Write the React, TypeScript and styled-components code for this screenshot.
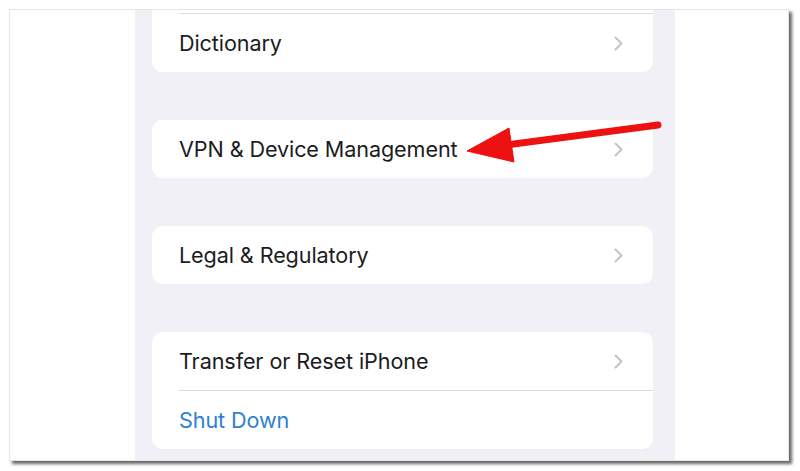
import React from 'react'
import styled, { createGlobalStyle } from 'styled-components'

const GlobalStyle = createGlobalStyle`
  html, body {
    margin: 0;
    padding: 0;
    background: #ffffff;
  }
  body {
    font-family: Inter, 'Noto Sans', 'Liberation Sans', sans-serif;
    -webkit-font-smoothing: antialiased;
  }
`

const Page = styled.div`
  position: relative;
  width: 800px;
  height: 471px;
  padding: 9px 0 0 9px;
  box-sizing: border-box;
  overflow: hidden;
`

const Frame = styled.div`
  width: 780px;
  height: 452px;
  box-sizing: border-box;
  border: 1px solid #e6e6e6;
  background: #ffffff;
  box-shadow: 3px 3px 3px rgba(0, 0, 0, 0.6);
  padding-left: 125px;
`

const Screen = styled.div`
  width: 540px;
  height: 450px;
  background: #f2f0f7;
  overflow: hidden;
  display: flex;
  flex-direction: column;
  gap: 48px;
  padding: 0 22px 0 17px;
  box-sizing: border-box;
`

const Card = styled.div<{ $offset?: number }>`
  background: #ffffff;
  border-radius: 11px;
  margin-top: ${p => p.$offset ?? 0}px;
`

const Row = styled.div`
  height: 58px;
  display: flex;
  align-items: center;
  justify-content: space-between;
  padding: 0 30px 0 27px;
`

const Label = styled.span<{ $blue?: boolean }>`
  font-size: 21.6px;
  color: ${p => (p.$blue ? '#2f80d2' : '#1c1c1e')};
  letter-spacing: -0.1px;
`

const Divider = styled.div`
  height: 1px;
  margin-left: 27px;
  background: #dcdce0;
`

const Overlay = styled.svg`
  position: absolute;
  left: 0;
  top: 0;
  pointer-events: none;
`

const Chevron = () => (
  <svg width="9" height="15" viewBox="0 0 9 15">
    <polyline
      points="1.5,1.5 7.5,7.5 1.5,13.5"
      fill="none"
      stroke="#c4c4c8"
      strokeWidth="2"
      strokeLinecap="round"
      strokeLinejoin="round"
    />
  </svg>
)

const Item = ({ label, blue, chevron = true }: { label?: string; blue?: boolean; chevron?: boolean }) => (
  <Row>
    <Label $blue={blue}>{label}</Label>
    {chevron && <Chevron />}
  </Row>
)

const App = () => (
  <Page>
    <GlobalStyle />
    <Frame>
      <Screen>
        <Card $offset={-55}>
          <Item chevron={false} />
          <Divider />
          <Item label="Dictionary" />
        </Card>
        <Card>
          <Item label="VPN & Device Management" />
        </Card>
        <Card>
          <Item label="Legal & Regulatory" />
        </Card>
        <Card>
          <Item label="Transfer or Reset iPhone" />
          <Divider />
          <Item label="Shut Down" blue chevron={false} />
        </Card>
      </Screen>
    </Frame>
    <Overlay width="800" height="471" viewBox="0 0 800 471">
      <line x1="506" y1="145" x2="658" y2="125" stroke="#ee1111" strokeWidth="7" strokeLinecap="round" />
      <polygon points="467,151 509,128 514,162" fill="#ee1111" stroke="#ee1111" strokeWidth="1" strokeLinejoin="round" />
    </Overlay>
  </Page>
)

export default App
